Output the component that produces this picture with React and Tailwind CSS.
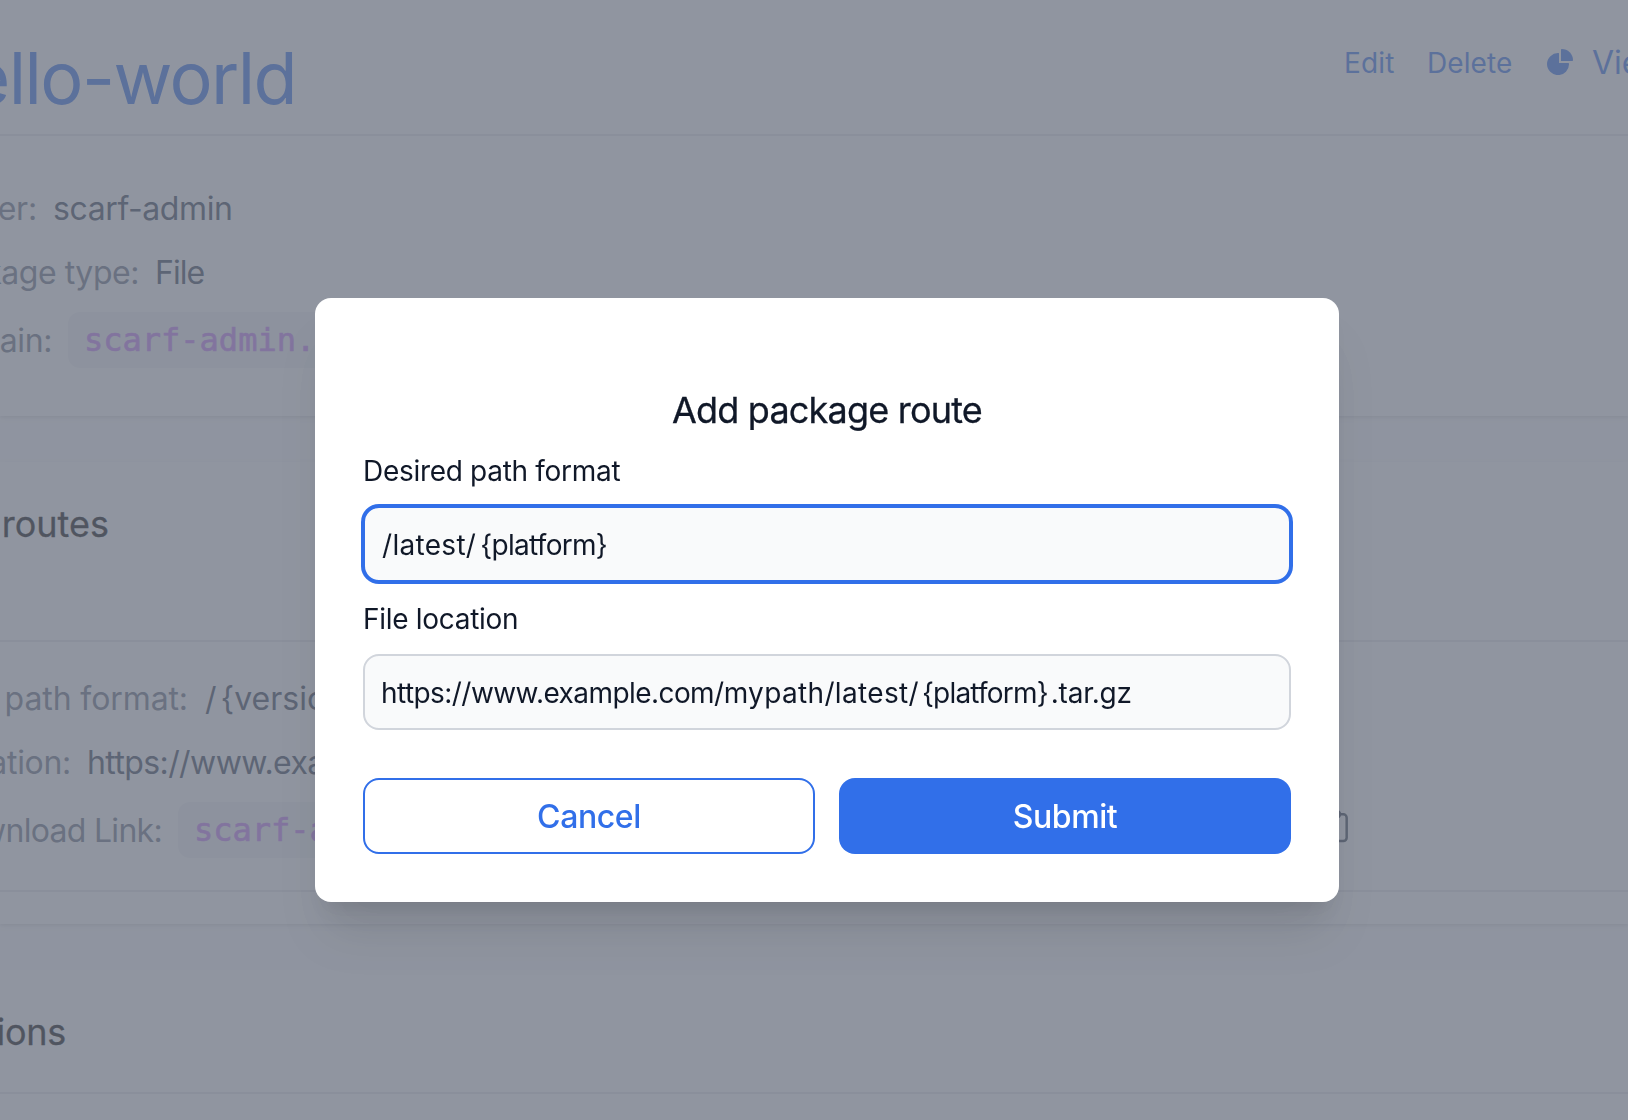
function Chip({ children }) {
  return (
    <span className="flex h-14 shrink-0 items-center rounded-xl bg-gray-100 px-4 font-['DejaVu_Sans_Mono',monospace] text-[#c67ef6] [-webkit-text-stroke:0.7px_#c67ef6]">
      {children}
    </span>
  );
}

function Row({ labelClass, label, tall, children }) {
  return (
    <div className={`flex w-[1355px] items-center gap-4 whitespace-nowrap text-[32px] ${tall ? "h-[72px]" : "h-16"}`}>
      <span className={`flex shrink-0 justify-end pt-0.5 text-gray-500 ${labelClass}`}>
        <span>{label}</span>
      </span>
      {children}
    </div>
  );
}

function PieIcon() {
  return (
    <svg className="mb-0.5" width="26" height="26" viewBox="0 0 26 26" fill="currentColor">
      <path d="M11.4 4.1Q12 4 12 4.7V14H21.3Q22 14 22 14.7A11 11 0 1 1 11.4 4.1Z" />
      <path d="M14.7 0A11.3 11.3 0 0 1 26 11.3Q26 12 25.3 12H14V.7Q14 0 14.7 0Z" />
    </svg>
  );
}

function ClipboardIcon() {
  return (
    <svg className="mb-2 ml-auto shrink-0 text-gray-700" width="40" height="40" viewBox="0 0 24 24" fill="none" stroke="currentColor" strokeWidth="1.5" strokeLinecap="round" strokeLinejoin="round">
      <path d="M9 5H7a2 2 0 0 0-2 2v12a2 2 0 0 0 2 2h10a2 2 0 0 0 2-2V7a2 2 0 0 0-2-2h-2M9 5a2 2 0 0 0 2 2h2a2 2 0 0 0 2-2M9 5a2 2 0 0 1 2-2h2a2 2 0 0 1 2 2" />
    </svg>
  );
}

function PackagePage() {
  return (
    <div className="h-[1120px] overflow-hidden bg-[#fcfcfd]">
      <section className="bg-white shadow-[0_2px_6px_rgba(0,0,0,0.08),0_2px_2px_rgba(0,0,0,0.05)]">
        <header className="flex h-[136px] justify-between border-b-2 border-gray-200 text-[#316fe9]">
          <h1 className="mt-[38px] flex w-[296px] justify-end whitespace-nowrap text-[72px] leading-[80px] tracking-[-1.6px]">
            <span>hello-world</span>
          </h1>
          <nav className="mt-[43px] flex h-10 w-[284px] items-center whitespace-nowrap text-[28px]">
            <a className="w-[83px] shrink-0 tracking-[0.2px]">Edit</a>
            <a className="w-[120px] shrink-0 tracking-[0.1px]">Delete</a>
            <a className="flex items-center gap-[19px] text-[32px]">
              <PieIcon />
              View
            </a>
          </nav>
        </header>
        <div className="py-10">
          <Row label="Owner:" labelClass="w-[37px] tracking-[-0.2px]">
            <span className="pt-0.5 text-gray-700 tracking-[-0.4px]">scarf-admin</span>
          </Row>
          <Row label="Package type:" labelClass="w-[139px] tracking-[-0.45px]">
            <span className="pt-0.5 text-gray-700 tracking-[-1px]">File</span>
          </Row>
          <Row label="Domain:" labelClass="w-[52px] tracking-[-0.4px]" tall>
            <Chip>scarf-admin.gateway.scarf.sh</Chip>
          </Row>
        </div>
      </section>

      <section className="mt-[46px] bg-white pb-8 shadow-[0_2px_6px_rgba(0,0,0,0.08),0_2px_2px_rgba(0,0,0,0.05)]">
        <div className="h-[180px] border-b-2 border-gray-200 pt-[42px]">
          <h2 className="flex w-[109px] justify-end whitespace-nowrap text-[36px] leading-10 text-black [-webkit-text-stroke:0.3px_black]">
            <span>Package routes</span>
          </h2>
        </div>
        <div className="border-b-2 border-gray-200 py-6">
          <Row label="Desired path format:" labelClass="w-[188px] tracking-[-0.1px]">
            <span className="pt-0.5 pl-px text-gray-700">/<span className="ml-1">{"{version}/{platform}"}</span></span>
          </Row>
          <Row label="File location:" labelClass="w-[71px] tracking-[-0.3px]">
            <span className="pt-0.5 text-gray-700 tracking-[-0.6px]">https://www.example.com/mypath</span>
          </Row>
          <Row label="Download Link:" labelClass="w-[162px] tracking-[-0.7px]" tall>
            <Chip>{"scarf-admin.gateway.scarf.sh/{version}/{platform}"}</Chip>
            <ClipboardIcon />
          </Row>
        </div>
      </section>

      <section className="mt-[46px] bg-white">
        <div className="h-[124px] border-b-2 border-gray-200 pt-[42px]">
          <h2 className="flex w-[66px] justify-end whitespace-nowrap text-[36px] leading-10 tracking-[-0.3px] text-black [-webkit-text-stroke:0.3px_black]">
            <span>Permissions</span>
          </h2>
        </div>
        <div className="h-10" />
      </section>
    </div>
  );
}

function RouteModal() {
  return (
    <div className="fixed inset-0 bg-[#6b7280]/75">
      <form className="mt-[298px] ml-[315px] h-[604px] w-[1024px] rounded-2xl bg-white px-12 pt-[92px] text-gray-900 shadow-[0_40px_50px_-10px_rgba(0,0,0,0.1),0_16px_20px_-12px_rgba(0,0,0,0.1)]">
        <h3 className="text-center text-[36px] leading-10 tracking-[-0.8px] [-webkit-text-stroke:0.3px_#111827]">Add package route</h3>
        <label className="mt-[21px] block text-[28px] leading-10 tracking-[-0.3px]">Desired path format</label>
        <div className="mt-[15px] flex h-[76px] items-center rounded-2xl border-2 border-[#316fe9] bg-gray-50 pt-px pl-[17px] text-[28px] ring-2 ring-[#316fe9]">
          <span className="tracking-[0.3px]">/latest/</span>
          <span className="ml-1 tracking-[-0.7px]">{"{platform}"}</span>
        </div>
        <label className="mt-[17px] block text-[28px] leading-10 tracking-[-0.3px]">File location</label>
        <div className="mt-[15px] flex h-[76px] items-center rounded-2xl border-2 border-gray-300 bg-gray-50 pt-px pl-4 text-[28px]">
          <span className="tracking-[-0.56px]">https://www.example.com/</span>
          <span className="tracking-[0.34px]">mypath/latest/</span>
          <span className="ml-[3px] tracking-[-0.8px]">{"{platform}"}</span>
          <span className="ml-[3px] tracking-[-0.23px]">.tar.gz</span>
        </div>
        <div className="mt-12 grid grid-cols-2 gap-6 text-[32px] font-medium tracking-[-0.4px]">
          <button type="button" className="h-[76px] rounded-2xl border-2 border-[#316fe9] pt-0.5 text-[#316fe9]">Cancel</button>
          <button type="button" className="h-[76px] rounded-2xl bg-[#316fe9] pt-0.5 text-white">Submit</button>
        </div>
      </form>
    </div>
  );
}

export default function App() {
  return (
    <div className="font-['Inter',sans-serif]">
      <PackagePage />
      <RouteModal />
    </div>
  );
}
